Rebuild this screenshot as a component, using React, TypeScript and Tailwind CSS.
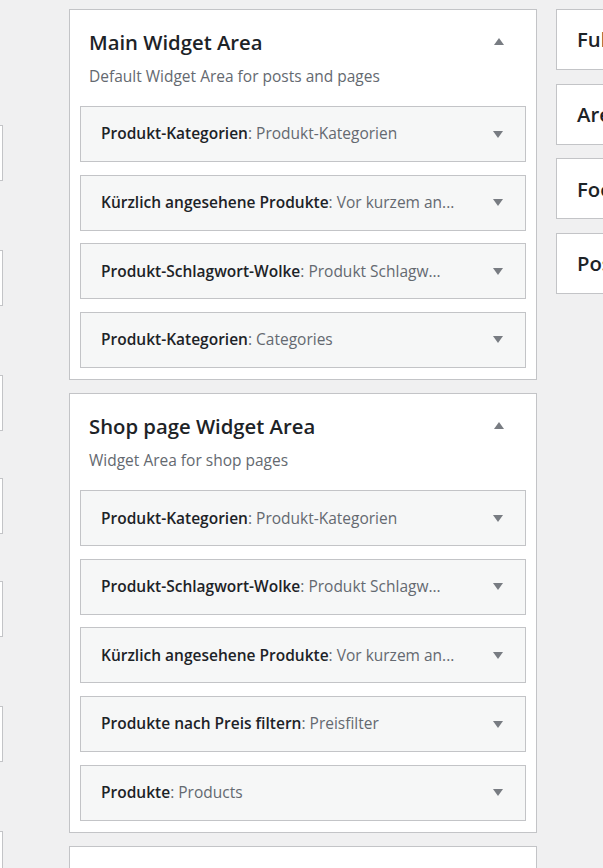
import React from 'react';

interface Widget {
  name: string;
  title: string;
}

interface Sidebar {
  name: string;
  description: string;
  widgets: Widget[];
}

const sidebars: Sidebar[] = [
  {
    name: 'Main Widget Area',
    description: 'Default Widget Area for posts and pages',
    widgets: [
      { name: 'Produkt-Kategorien', title: 'Produkt-Kategorien' },
      { name: 'Kürzlich angesehene Produkte', title: 'Vor kurzem an...' },
      { name: 'Produkt-Schlagwort-Wolke', title: 'Produkt Schlagw...' },
      { name: 'Produkt-Kategorien', title: 'Categories' },
    ],
  },
  {
    name: 'Shop page Widget Area',
    description: 'Widget Area for shop pages',
    widgets: [
      { name: 'Produkt-Kategorien', title: 'Produkt-Kategorien' },
      { name: 'Produkt-Schlagwort-Wolke', title: 'Produkt Schlagw...' },
      { name: 'Kürzlich angesehene Produkte', title: 'Vor kurzem an...' },
      { name: 'Produkte nach Preis filtern', title: 'Preisfilter' },
      { name: 'Produkte', title: 'Products' },
    ],
  },
];

const collapsed = ['Full Width Widget Area', 'Area Below Header', 'Footer Widget Area', 'Post Sidebar Area'];

// left column: spacing between the available widgets (off-screen part)
const availableTops = ['mt-[125px]', 'mt-[69px]', 'mt-[69px]', 'mt-[47px]', 'mt-[47px]', 'mt-[69px]', 'mt-[69px]'];

function Arrow({ up }: { up?: boolean }) {
  return (
    <svg width="10" height="7" viewBox="0 0 10 7" className="shrink-0">
      {up ? <path d="M0 7 L5 0 L10 7 Z" fill="#787c82" /> : <path d="M0 0 L10 0 L5 7 Z" fill="#787c82" />}
    </svg>
  );
}

function WidgetRow({ widget }: { widget: Widget }) {
  return (
    <div className="h-[56px] shrink-0 flex items-center justify-between border border-[#c3c4c7] bg-[#f6f7f7] pl-[20px] pr-[22px]">
      <div className="text-[15.5px] whitespace-nowrap text-[#1d2327]">
        <span className="font-semibold">{widget.name}</span>
        <span className="text-[#646970]">: {widget.title}</span>
      </div>
      <Arrow />
    </div>
  );
}

function SidebarPanel({ sidebar }: { sidebar: Sidebar }) {
  return (
    <div className="bg-white border border-[#c3c4c7] px-[10px] pb-[11px]">
      <div className="flex items-start justify-between pl-[9px] pr-[22px] pt-[17px]">
        <h2 className="text-[20.3px] leading-[30px] font-semibold text-[#1d2327]">{sidebar.name}</h2>
        <div className="pt-[11px]">
          <Arrow up />
        </div>
      </div>
      <p className="pl-[9px] text-[15.5px] leading-[20px] mt-[9px] text-[#646970]">{sidebar.description}</p>
      <div className="mt-[20px] flex flex-col gap-[12.6px]">
        {sidebar.widgets.map((w, i) => (
          <WidgetRow key={i} widget={w} />
        ))}
      </div>
    </div>
  );
}

export default function App() {
  return (
    <div
      className="w-[603px] h-[868px] overflow-hidden bg-[#f0f0f1] flex"
      style={{ fontFamily: '"Open Sans", "Noto Sans", sans-serif' }}
    >
      <div className="w-[3px] shrink-0 flex flex-col">
        {availableTops.map((m, i) => (
          <div key={i} className={`${m} h-[56px] w-[3px] shrink-0 bg-white border border-l-0 border-[#c3c4c7]`} />
        ))}
      </div>

      <div className="ml-[66px] mt-[9px] w-[468px] shrink-0 flex flex-col gap-[13.5px]">
        {sidebars.map((s, i) => (
          <SidebarPanel key={i} sidebar={s} />
        ))}
        <div className="bg-white border border-[#c3c4c7] h-[60px] shrink-0" />
      </div>

      <div className="ml-[19px] mt-[9px] w-[300px] shrink-0 flex flex-col gap-[13.67px]">
        {collapsed.map((name, i) => (
          <div key={i} className="h-[61px] shrink-0 bg-white border border-[#c3c4c7] flex items-center pl-[20px]">
            <h2 className="text-[20.3px] font-semibold text-[#1d2327] whitespace-nowrap">{name}</h2>
          </div>
        ))}
      </div>
    </div>
  );
}
